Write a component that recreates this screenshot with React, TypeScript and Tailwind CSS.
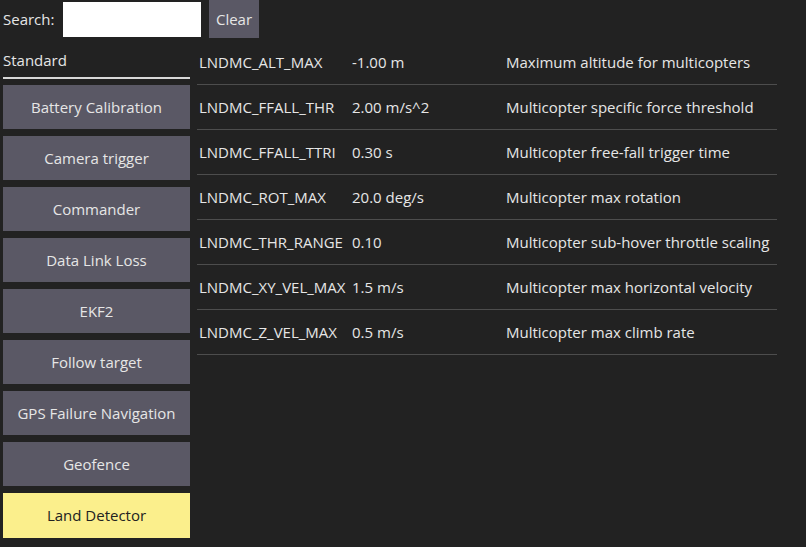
const groups = [
  "Battery Calibration",
  "Camera trigger",
  "Commander",
  "Data Link Loss",
  "EKF2",
  "Follow target",
  "GPS Failure Navigation",
  "Geofence",
  "Land Detector",
];

const params = [
  { name: "LNDMC_ALT_MAX", value: "-1.00 m", desc: "Maximum altitude for multicopters" },
  { name: "LNDMC_FFALL_THR", value: "2.00 m/s^2", desc: "Multicopter specific force threshold" },
  { name: "LNDMC_FFALL_TTRI", value: "0.30 s", desc: "Multicopter free-fall trigger time" },
  { name: "LNDMC_ROT_MAX", value: "20.0 deg/s", desc: "Multicopter max rotation" },
  { name: "LNDMC_THR_RANGE", value: "0.10", desc: "Multicopter sub-hover throttle scaling" },
  { name: "LNDMC_XY_VEL_MAX", value: "1.5 m/s", desc: "Multicopter max horizontal velocity" },
  { name: "LNDMC_Z_VEL_MAX", value: "0.5 m/s", desc: "Multicopter max climb rate" },
];

export default function App() {
  const selected = "Land Detector";

  return (
    <div className="h-[547px] w-[806px] overflow-hidden bg-[#222222] font-['Open_Sans',sans-serif] text-[15px] text-[#e6e6e6]">
      {/* search bar */}
      <div className="flex h-[38px] items-center">
        <span className="ml-[3px] w-[60px]">Search:</span>
        <input className="h-[35px] w-[138px] bg-white px-2 text-black outline-none" />
        <button className="ml-[8px] h-[38px] w-[50px] bg-[#5a5865] text-[#e6e6e6]">Clear</button>
      </div>

      <div className="mt-[2px] flex">
        {/* group list */}
        <div className="ml-[3px] flex w-[187px] flex-col">
          <div className="flex h-[39px] items-center border-b-2 border-[#d8d8d8] pt-[3px]">Standard</div>
          <div className="mt-[6px] flex flex-col gap-[7px]">
            {groups.map((g) => (
              <button
                key={g}
                className={
                  g === selected
                    ? "h-[45px] w-full bg-[#fbef8c] text-[#222222]"
                    : "h-[44px] w-full bg-[#5a5865] text-[#e6e6e6]"
                }
              >
                {g}
              </button>
            ))}
          </div>
        </div>

        {/* parameter table */}
        <div className="ml-[7px] w-[580px]">
          {params.map((p) => (
            <div
              key={p.name}
              className="grid h-[45px] grid-cols-[153px_154px_1fr] items-center border-b border-[#4d4d4d] pl-[2px]"
            >
              <span className="whitespace-nowrap">{p.name}</span>
              <span className="whitespace-nowrap">{p.value}</span>
              <span className="whitespace-nowrap">{p.desc}</span>
            </div>
          ))}
        </div>
      </div>
    </div>
  );
}
